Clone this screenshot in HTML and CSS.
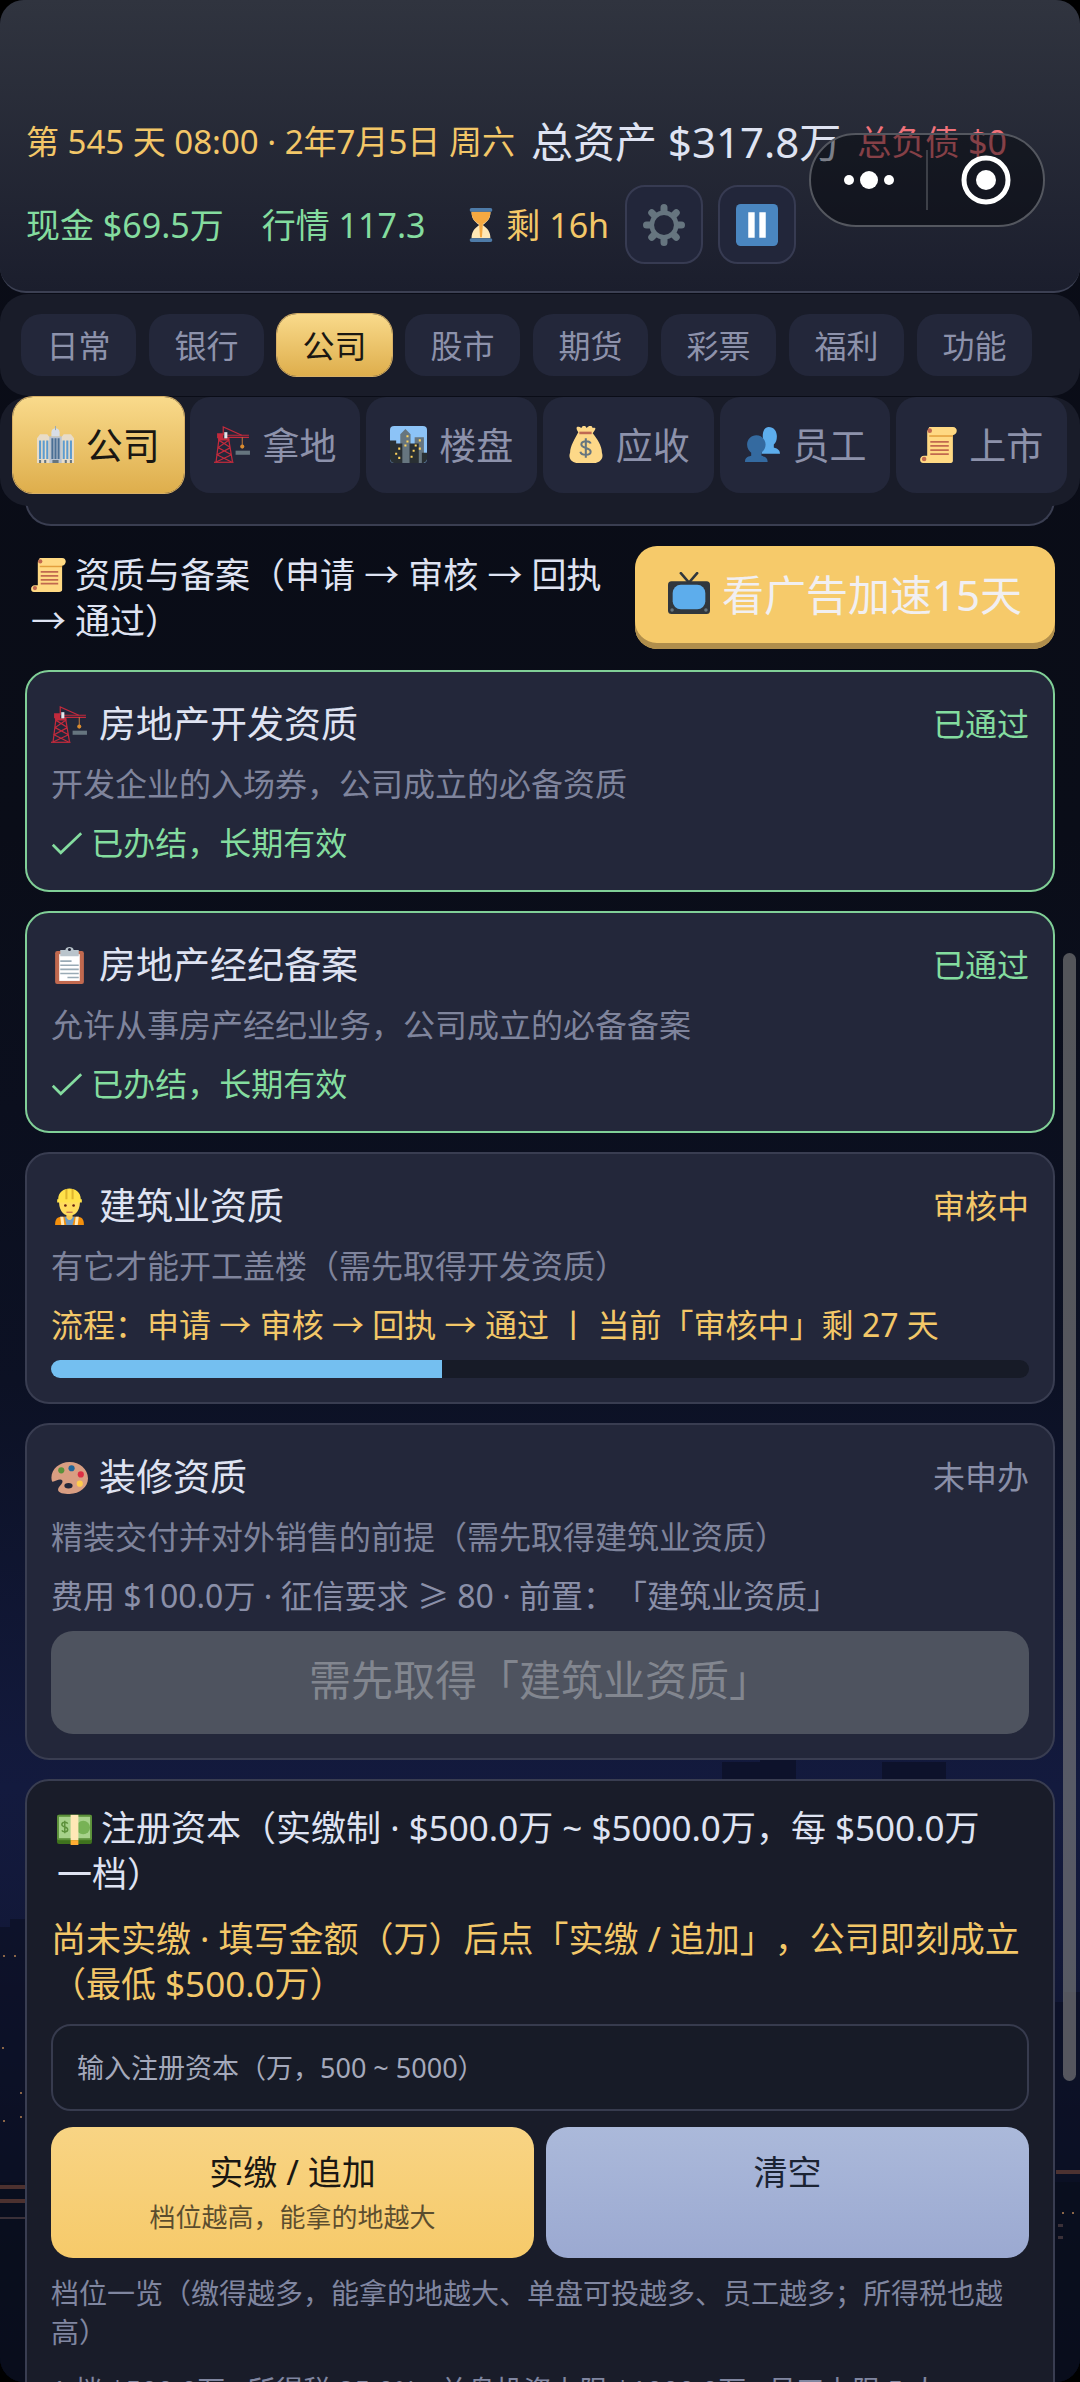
FILE: index.html
```html
<!DOCTYPE html>
<html lang="zh-CN">
<head>
    <meta charset="UTF-8">
    <meta name="viewport" content="width=device-width, initial-scale=1.0">
    <title>公司 - 资质与备案</title>
    <link rel="stylesheet" href="styles.css">
</head>
<body>
    <!-- icon sprite -->
    <svg class="sprite" aria-hidden="true">
        <symbol id="i-hourglass" viewBox="0 0 36 36">
            <path d="M8 4h20c0 8-3 10-8 14 5 4 8 7 8 14H8c0-7 3-10 8-14-5-4-8-6-8-14z" fill="#ffe8b6"/>
            <path d="M8 4h20c0 7-3 10-8 13l-1 14h-2l-1-14C11 14 8 11 8 4z" fill="#f5a941"/>
            <rect x="6" width="24" height="4" rx="2" fill="#4e7ba8"/>
            <rect x="6" y="32" width="24" height="4" rx="2" fill="#4e7ba8"/>
        </symbol>
        <symbol id="i-gear" viewBox="0 0 36 36">
            <g stroke="#66757f" stroke-width="6" stroke-linecap="round">
                <path d="M18 3v30M3 18h30M7.500 7.500l21 21M28.500 7.500l-21 21"/>
            </g>
            <circle cx="18" cy="18" r="12.500" fill="#66757f"/>
            <circle cx="18" cy="18" r="8.500" fill="#23273a"/>
        </symbol>
        <symbol id="i-pause" viewBox="0 0 36 36">
            <rect width="36" height="36" rx="4" fill="#4a86c0"/>
            <path d="M10.500 7h5.500v22h-5.500zM20 7h5.500v22H20z" fill="#fff"/>
        </symbol>
        <symbol id="i-building" viewBox="0 0 36 36">
            <path d="M0 12l3-4h7l3 4v24H0zM23 12l3-4h7l3 4v24H23z" fill="#e8dcc8"/>
            <path d="M12 10h12v26H12z" fill="#b9c3d0"/>
            <path d="M14 6c0-5 8-5 8 0v4h-8z" fill="#d8dee6"/>
            <path d="M17.500 0h1v4h-1z" fill="#99aab5"/>
            <path d="M2 14h2v18H2zM5.500 14h2v18h-2zM9 14h2v18H9zM25 14h2v18h-2zM28.500 14h2v18h-2zM32 14h2v18h-2z" fill="#5b9bd0"/>
            <path d="M14 12h2v20h-2zM17 12h2v20h-2zM20 12h2v20h-2z" fill="#4a6f95"/>
            <path d="M2 33h2v3H2zM7 33h2v3H7zM15 33h6v3h-6zM27 33h2v3h-2zM32 33h2v3h-2z" fill="#66757f"/>
        </symbol>
        <symbol id="i-crane" viewBox="0 0 36 36">
            <g fill="none" stroke="#c22a3c" stroke-width="1.200">
                <path d="M5 11L2 35M14 11l4 24M5 14l11 7M14 14L4 21l13 7M16 21L3 28l14 7M17 28L2 35M9 9V1l18 8"/>
                <path d="M11 9h23M11 11h23"/>
                <path d="M0 35.300h19"/>
            </g>
            <path d="M3 7h6v5H3zM4 12h11v2H4z" fill="#c22a3c"/>
            <path d="M10 6h3v6h-3z" fill="#e1e8ed"/>
            <path d="M27 11h1v11h-1z" fill="#be7a3c"/>
            <circle cx="27.500" cy="20" r="2" fill="#d98b2f"/>
            <path d="M21 24h14v4H21z" fill="#66757f"/>
        </symbol>
        <symbol id="i-city" viewBox="0 0 36 36">
            <rect width="36" height="36" rx="4" fill="#8cc3f7"/>
            <path d="M10 8l5-5 5 5v28H10zM24 11h9v25h-9z" fill="#66757f"/>
            <path d="M0 14h6v3h6v19H4c-2 0-4-2-4-4zM19 17h9v19h-9zM31 26h5v6c0 2-2 4-5 4z" fill="#292f33"/>
            <path d="M8 21h2v2H8zM5 26h2v2H5zM8 30h2v2H8zM16 9h2v2h-2zM16 14h2v2h-2zM14 18h2v2h-2zM24 18h2v2h-2zM22 23h2v2h-2zM20 29h2v2h-2zM28 13h2v2h-2zM28 21h2v2h-2z" fill="#ffd35c"/>
        </symbol>
        <symbol id="i-bag" viewBox="0 0 36 36">
            <path d="M11 6c-4-6 0-6 3-4 1-3 4-3 5 0 3-3 5-3 6 0 3-1 4 0 0 5 4 5 9 12 9 19 2 6-2 9-6 10H9c-5-1-8-5-6-10 0-7 5-14 8-20z" fill="#fdd888"/>
            <path d="M12 5.500h12v2.500H12z" fill="#bf6952"/>
            <path d="M23 17c-1-3-9-3-9 1s9 3 9 7-9 4-10 0M18.300 12v19" fill="none" stroke="#67757f" stroke-width="2"/>
        </symbol>
        <symbol id="i-people" viewBox="0 0 36 36">
            <path d="M24 1c5 0 8 4 8 9 0 4-1 6-3 8v3c3 1 6 2 6 6H17l2-12c-2-7 0-14 5-14z" fill="#5dadec"/>
            <path d="M12 9c5 0 9 4 9 9 0 4-2 6-4 8v3c4 1 6 2 6 6H1c0-4 2-5 6-6v-3c-2-2-4-4-4-8 0-5 4-9 9-9z" fill="#346aa0"/>
        </symbol>
        <symbol id="i-scroll" viewBox="0 0 36 36">
            <path d="M9 1h23c5 0 5 7 0 8v25c0 1-1 2-3 2H3c-4 0-4-7 1-7h3V5z" fill="#ffd983"/>
            <circle cx="9.500" cy="4.500" r="2.200" fill="#c1694f"/>
            <circle cx="4" cy="32" r="2.200" fill="#c1694f"/>
            <path d="M9 9h23v1.500H9z" fill="#e39f3d"/>
            <path d="M10 14.500h18v1.800H10zM10 18.500h18v1.800H10zM10 22.500h18v1.800H10zM10 26.500h18v1.800H10z" fill="#c1694f"/>
        </symbol>
        <symbol id="i-tv" viewBox="0 0 36 36">
            <path d="M11 1l7 8 7-8" fill="none" stroke="#31373d" stroke-width="2.200" stroke-linecap="round"/>
            <rect y="8" width="36" height="28" rx="3" fill="#31373d"/>
            <rect x="4" y="11" width="28" height="21" rx="7" fill="#5dadec"/>
            <circle cx="3.500" cy="32.500" r="1.500" fill="#66757f"/>
            <circle cx="32.500" cy="32.500" r="1.500" fill="#66757f"/>
        </symbol>
        <symbol id="i-clipboard" viewBox="0 0 36 36">
            <rect x="4" y="4" width="28" height="32" rx="2" fill="#c1694f"/>
            <path d="M8 7h20v26H8z" fill="#fff"/>
            <path d="M9 3h5c0-4 8-4 8 0h5v6H9z" fill="#b9c4cc"/>
            <circle cx="18" cy="2.500" r="1.500" fill="#23273a"/>
            <path d="M9 13h11v1.500H9zM9 17h18v1.500H9zM9 21h18v1.500H9zM9 25h18v1.500H9zM16 29h11v1.500H16z" fill="#99aab5"/>
        </symbol>
        <symbol id="i-worker" viewBox="0 0 36 36">
            <path d="M4 36c0-6 2-8 7-8h14c5 0 7 2 7 8z" fill="#f4900c"/>
            <path d="M13 28h10l-2 8h-6z" fill="#6d9ac4"/>
            <path d="M9 28h3l1 8h-3zM24 28h3l-1 8h-3z" fill="#ffe8b6"/>
            <path d="M15 24h6v5c-2 3-4 3-6 0z" fill="#f9ca55"/>
            <path d="M8 11h20c1 9-3 16-10 16S7 20 8 11z" fill="#ffdc5d"/>
            <path d="M7 11C7-3 29-3 29 11h1v3H6v-3z" fill="#ffe14a"/>
            <path d="M14 1h2v10h-2zM20 1h2v10h-2z" fill="#dfb52e"/>
            <circle cx="14" cy="17" r="1.300" fill="#662113"/>
            <circle cx="22" cy="17" r="1.300" fill="#662113"/>
            <path d="M15 23h6v1.200h-6z" fill="#c1694f"/>
        </symbol>
        <symbol id="i-palette" viewBox="0 0 36 36">
            <path d="M18 3c10 0 18 7 18 16 0 8-8 15-18 15-6 0-12-1-11-5 1-3 5-5 4-8-2-3-8 2-10 1C-2 12 7 3 18 3z" fill="#d99e82"/>
            <ellipse cx="17" cy="26" rx="4" ry="2.600" fill="#23273a"/>
            <circle cx="10" cy="11" r="3" fill="#5c913b"/>
            <circle cx="20" cy="9" r="3" fill="#226699"/>
            <circle cx="29" cy="15" r="3" fill="#dd2e44"/>
            <circle cx="28" cy="24" r="3" fill="#ffcc4d"/>
        </symbol>
        <symbol id="i-cash" viewBox="0 0 36 36">
            <rect y="5" width="36" height="30" rx="2" fill="#3e721d"/>
            <rect y="5" width="36" height="26" rx="2" fill="#5c913b"/>
            <rect x="2" y="7" width="32" height="22" fill="#a7d28b"/>
            <circle cx="27" cy="18" r="7" fill="#77b255"/>
            <path d="M14 5h8v26h-8z" fill="#ffe8b6"/>
            <path d="M14 31h8v5h-8z" fill="#ffac33"/>
            <path d="M11 14c-1-2-6-2-6 1s6 2 6 5-5 3-6 1M8 11v13" fill="none" stroke="#5c913b" stroke-width="1.500"/>
        </symbol>
        <symbol id="i-check" viewBox="0 0 36 36">
            <path d="M2 20l9 9L34 7" fill="none" stroke="currentColor" stroke-width="3"/>
        </symbol>
    </svg>

    <div class="app">
        <svg class="skyline" viewBox="0 0 1080 640" preserveAspectRatio="none" aria-hidden="true">
            <path d="M722 20h38v-5h36v60h-74zM882 20h64v60h-64zM0 185h10v-8h20v463H0zM1050 260h14v-10h16v390h-30z" fill="#0c1024" fill-opacity=".7"/>
            <path d="M0 440h30v200H0zM1050 440h30v200h-30z" fill="#090d1a" fill-opacity=".6"/>
            <path d="M0 443h26v4H0zM0 457h26v4H0zM1056 428h24v4h-24z" fill="#7a4a3a" fill-opacity=".6"/>
            <path d="M3 213h2v2H3zM14 213h2v2h-2zM2 305h2v2H2zM20 350h2v2h-2zM20 374h2v2h-2zM3 378h2v2H3zM1062 470h2v2h-2zM1072 470h2v2h-2z" fill="#8a6547"/>
            <path d="M0 475h26v2H0zM1058 482h5v3h-5zM1058 494h5v3h-5z" fill="#3a3038"/>
        </svg>

        <header class="topbar">
            <div class="top-row">
                <span class="date">第 545 天 08:00 · 2年7月5日 周六</span>
                <span class="assets">总资产 $317.8万</span>
                <span class="debt">总负债 $0</span>
            </div>
            <div class="top-row stats">
                <span class="good">现金 $69.5万</span>
                <span class="good">行情 117.3</span>
                <span class="warn"><svg class="icon"><use href="#i-hourglass"/></svg> 剩 16h</span>
                <div class="top-buttons">
                    <button class="icon-btn" aria-label="设置"><svg><use href="#i-gear"/></svg></button>
                    <button class="icon-btn" aria-label="暂停"><svg><use href="#i-pause"/></svg></button>
                </div>
            </div>
            <div class="capsule">
                <button aria-label="更多">
                    <svg width="50" height="18" viewBox="0 0 50 18"><circle cx="5" cy="9" r="5"/><circle cx="25" cy="9" r="9"/><circle cx="45" cy="9" r="5"/></svg>
                </button>
                <button aria-label="关闭">
                    <svg width="50" height="50" viewBox="0 0 50 50"><circle cx="25" cy="25" r="10"/><circle cx="25" cy="25" r="22" fill="none" stroke="#fff" stroke-width="5"/></svg>
                </button>
            </div>
        </header>

        <nav class="main-tabs">
            <button class="tab">日常</button>
            <button class="tab">银行</button>
            <button class="tab active">公司</button>
            <button class="tab">股市</button>
            <button class="tab">期货</button>
            <button class="tab">彩票</button>
            <button class="tab">福利</button>
            <button class="tab">功能</button>
        </nav>

        <nav class="sub-tabs">
            <button class="tab active"><svg class="icon"><use href="#i-building"/></svg>公司</button>
            <button class="tab"><svg class="icon"><use href="#i-crane"/></svg>拿地</button>
            <button class="tab"><svg class="icon"><use href="#i-city"/></svg>楼盘</button>
            <button class="tab"><svg class="icon"><use href="#i-bag"/></svg>应收</button>
            <button class="tab"><svg class="icon"><use href="#i-people"/></svg>员工</button>
            <button class="tab"><svg class="icon"><use href="#i-scroll"/></svg>上市</button>
        </nav>

        <main class="content">
            <div class="panel-end"></div>

            <div class="section-head">
                <h2 class="section-title"><svg class="icon"><use href="#i-scroll"/></svg> 资质与备案（申请 → 审核 → 回执 → 通过）</h2>
                <button class="big-btn ad-btn"><svg class="icon"><use href="#i-tv"/></svg>看广告加速15天</button>
            </div>

            <div class="cards">
                <article class="card done">
                    <div class="card-head">
                        <h3><svg class="icon"><use href="#i-crane"/></svg>房地产开发资质</h3>
                        <span class="good">已通过</span>
                    </div>
                    <p class="desc">开发企业的入场券，公司成立的必备资质</p>
                    <p class="state good"><svg class="icon"><use href="#i-check"/></svg> 已办结，长期有效</p>
                </article>

                <article class="card done">
                    <div class="card-head">
                        <h3><svg class="icon"><use href="#i-clipboard"/></svg>房地产经纪备案</h3>
                        <span class="good">已通过</span>
                    </div>
                    <p class="desc">允许从事房产经纪业务，公司成立的必备备案</p>
                    <p class="state good"><svg class="icon"><use href="#i-check"/></svg> 已办结，长期有效</p>
                </article>

                <article class="card">
                    <div class="card-head">
                        <h3><svg class="icon"><use href="#i-worker"/></svg>建筑业资质</h3>
                        <span class="warn">审核中</span>
                    </div>
                    <p class="desc">有它才能开工盖楼（需先取得开发资质）</p>
                    <p class="state warn">流程：申请 → 审核 → 回执 → 通过 丨 当前「审核中」剩 27 天</p>
                    <div class="progress"><div class="progress-fill" style="width: 40%"></div></div>
                </article>

                <article class="card">
                    <div class="card-head">
                        <h3><svg class="icon"><use href="#i-palette"/></svg>装修资质</h3>
                        <span class="muted">未申办</span>
                    </div>
                    <p class="desc">精装交付并对外销售的前提（需先取得建筑业资质）</p>
                    <p class="state muted">费用 $100.0万 · 征信要求 ≥ 80 · 前置：「建筑业资质」</p>
                    <button class="big-btn locked-btn" disabled>需先取得「建筑业资质」</button>
                </article>

                <section class="card capital">
                    <h2 class="section-title"><svg class="icon"><use href="#i-cash"/></svg> 注册资本（实缴制 · $500.0万 ~ $5000.0万，每 $500.0万<br>一档）</h2>
                    <p class="hint warn">尚未实缴 · 填写金额（万）后点「实缴 / 追加」，公司即刻成立<br>（最低 $500.0万）</p>
                    <input class="amount" type="text" inputmode="numeric" aria-label="注册资本" placeholder="输入注册资本（万，500 ~ 5000）">
                    <div class="actions">
                        <button class="action gold">实缴 / 追加<small>档位越高，能拿的地越大</small></button>
                        <button class="action blue">清空</button>
                    </div>
                    <p class="note">档位一览（缴得越多，能拿的地越大、单盘可投越多、员工越多；所得税也越高）</p>
                    <p class="note">1 档 $500.0万 · 所得税 25.0% · 单盘投资上限 $1000.0万 · 员工上限 5 人</p>
                </section>
            </div>
        </main>

        <div class="scrollbar"></div>
    </div>
</body>
</html>
```
FILE: styles.css
```css
* {
    box-sizing: border-box;
}

body {
    margin: 0;
    background: #000;
    color: #dfe3f2;
    font-family: "Noto Sans", "Noto Sans CJK SC", sans-serif;
    font-size: 32px;
    text-spacing-trim: space-all;
}

h2, h3, p {
    margin: 0;
    font-weight: 400;
}

button, input {
    font-family: inherit;
    border: none;
    margin: 0;
    padding: 0;
}

button {
    cursor: pointer;
}

.sprite {
    display: none;
}

.icon {
    width: 1em;
    height: 1em;
    vertical-align: -4px;
    flex: none;
}

.good { color: #84dc9f; }
.warn { color: #f3c768; }
.muted { color: #8a8fa8; }

.app {
    position: relative;
    height: 100vh;
    overflow: hidden;
    border-radius: 24px;
    background: linear-gradient(#0a0c16 0%, #0a0d18 35%, #0c1124 58%, #131a3e 75%, #121838 82%, #0d1228 90%, #080c18 100%);
}

.skyline {
    position: absolute;
    left: 0;
    bottom: 0;
    width: 100%;
    height: 640px;
}

/* header */
.topbar {
    position: relative;
    padding: 113px 26px 27px;
    border-bottom: 2px solid #3c4053;
    border-radius: 0 0 26px 26px;
    background: linear-gradient(#30343f, #1b1e2d);
}

.top-row {
    display: flex;
    align-items: center;
    gap: 16px;
    line-height: 58px;
    white-space: nowrap;
}

.date { color: #f3c768; font-size: 33px; }
.assets { font-size: 42px; }
.debt { font-size: 34px; color: #f0727a; }

.stats {
    gap: 38px;
    margin-top: 14px;
    font-size: 34px;
}

.top-buttons {
    display: flex;
    gap: 15px;
    margin-left: -22px;
}

.icon-btn {
    display: flex;
    align-items: center;
    justify-content: center;
    width: 78px;
    height: 79px;
    border: 2px solid #373b52;
    border-radius: 20px;
    background: #22263a;
}

.icon-btn svg {
    width: 42px;
    height: 42px;
}

.capsule {
    position: absolute;
    top: 133px;
    right: 35px;
    display: flex;
    align-items: center;
    width: 236px;
    height: 94px;
    border: 2px solid #54575f;
    border-radius: 47px;
    background: rgba(3, 5, 8, .45);
}

.capsule button {
    flex: 1;
    display: flex;
    align-items: center;
    justify-content: center;
    height: 60px;
    background: none;
}

.capsule button + button {
    border-left: 2px solid #3d4048;
}

.capsule svg {
    fill: #fff;
}

/* tabs */
.main-tabs, .sub-tabs {
    position: relative;
    z-index: 1;
    display: flex;
    margin-top: 1px;
    border-radius: 28px;
    background: #191c29;
}

.main-tabs {
    gap: 13px;
    padding: 20px 21px;
}

.sub-tabs {
    gap: 6px;
    padding: 0 13px 13px;
}

.tab {
    padding-bottom: 2px;
    border-radius: 20px;
    background: #23273a;
    color: #8d92ab;
    white-space: nowrap;
}

.main-tabs .tab {
    width: 115px;
    height: 62px;
    font-size: 32px;
}

.sub-tabs .tab {
    flex: 1;
    display: flex;
    align-items: center;
    justify-content: center;
    gap: 12px;
    height: 96px;
    font-size: 37px;
}

.tab.active {
    background: linear-gradient(#f9da8b, #deae4c);
    box-shadow: 0 0 0 1px #d8b066;
    color: #1a1712;
}

/* content */
.content {
    position: relative;
    padding: 0 25px;
}

.panel-end {
    height: 50px;
    margin-top: -30px;
    border: 2px solid #3a3e51;
    border-top: none;
    border-radius: 0 0 26px 26px;
    background: #191c29;
}

.section-head {
    display: flex;
    align-items: center;
    justify-content: space-between;
    gap: 12px;
    margin: 20px 0 21px;
}

.section-title {
    padding: 0 6px;
    font-size: 35px;
    line-height: 46px;
}

.section-head .section-title {
    padding-right: 0;
}

.big-btn {
    display: flex;
    align-items: center;
    justify-content: center;
    height: 103px;
    padding-bottom: 10px;
    border-radius: 22px;
    font-size: 42px;
    white-space: nowrap;
}

.ad-btn {
    flex: none;
    gap: 12px;
    width: 420px;
    background: #f6ca6a;
    box-shadow: inset 0 -6px 0 #b08e4c;
    color: #f1eff2;
}

.locked-btn {
    width: 100%;
    margin: 7px 0 5px;
    background: #4e535f;
    color: #82868f;
    cursor: default;
}

.cards {
    display: flex;
    flex-direction: column;
    gap: 19px;
}

.card {
    padding: 22px 24px 19px;
    border: 2px solid #393d51;
    border-radius: 24px;
    background: #23273a;
}

.card.done {
    border-color: #80cf97;
}

.card-head {
    display: flex;
    align-items: center;
    justify-content: space-between;
    line-height: 60px;
}

.card-head h3 {
    display: flex;
    align-items: center;
    gap: 11px;
    font-size: 37px;
}

.desc {
    color: #7f849c;
    line-height: 60px;
}

.state {
    line-height: 57px;
}

.progress {
    height: 18px;
    margin: 7px 0 5px;
    border-radius: 9px;
    background: #171b27;
    overflow: hidden;
}

.progress-fill {
    height: 100%;
    background: #74bff0;
}

/* registered capital */
.capital {
    padding-top: 24px;
    padding-bottom: 40px;
    background: #191c29;
}

.hint {
    margin: 19px 0 18px;
    font-size: 35px;
    line-height: 45px;
}

.amount {
    display: block;
    width: 100%;
    height: 87px;
    padding: 0 24px;
    border: 2px solid #373b4e;
    border-radius: 20px;
    background: #171b27;
    color: #dfe3f2;
    font-size: 27px;
}

.amount::placeholder {
    color: #a4a9bb;
}

.actions {
    display: grid;
    grid-template-columns: 1fr 1fr;
    gap: 12px;
    margin: 16px 0;
}

.action {
    display: flex;
    flex-direction: column;
    align-items: center;
    height: 131px;
    padding-top: 23px;
    border-radius: 22px;
    font-size: 34px;
    line-height: 45px;
}

.action small {
    font-size: 26px;
    opacity: .7;
}

.gold {
    background: linear-gradient(#f8d484, #f6ca6a);
    color: #1a1712;
}

.blue {
    background: linear-gradient(#abb9da, #9ba9d1);
    color: #1b2333;
}

.note {
    margin-bottom: 19px;
    color: #8086a0;
    font-size: 28px;
    line-height: 39px;
}

.scrollbar {
    position: absolute;
    top: 40%;
    right: 4px;
    width: 13px;
    height: 1128px;
    border-radius: 7px;
    background: rgba(125, 125, 125, .65);
}
```
